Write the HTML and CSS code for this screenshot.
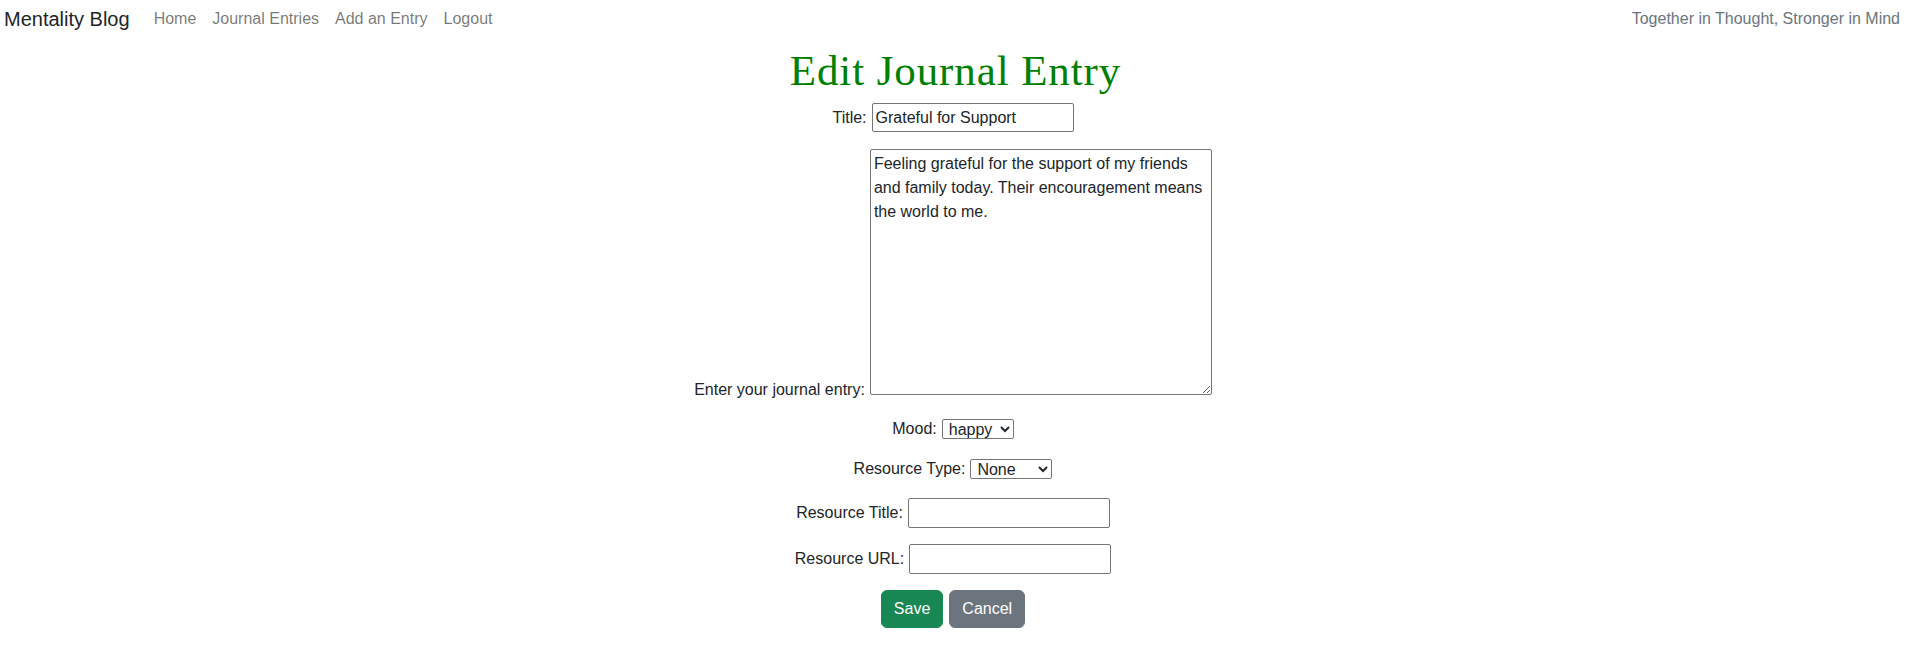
FILE: index.html
```html
<!DOCTYPE html>
<html lang="en">
<head>
<meta charset="utf-8">
<title>Edit Journal Entry - Mentality Blog</title>
<link rel="stylesheet" href="styles.css">
</head>
<body>
<nav class="navbar">
  <a class="brand" href="#">Mentality Blog</a>
  <ul class="nav-links">
    <li><a href="#">Home</a></li>
    <li><a href="#">Journal Entries</a></li>
    <li><a href="#">Add an Entry</a></li>
    <li><a href="#">Logout</a></li>
  </ul>
  <span class="tagline">Together in Thought, Stronger in Mind</span>
</nav>
<main class="page">
  <h1 class="page-title">Edit Journal Entry</h1>
  <form class="entry-form">
    <div class="row row-title">
      <label for="title">Title:</label>
      <input type="text" id="title" class="text-input" value="Grateful for Support">
    </div>
    <div class="row row-body">
      <label for="body" class="body-label">Enter your journal entry:</label>
      <textarea id="body" class="body-input">Feeling grateful for the support of my friends and family today. Their encouragement means the world to me.</textarea>
    </div>
    <div class="row row-select">
      <label for="mood">Mood:</label>
      <select id="mood" class="select mood-select">
        <option selected>happy</option>
        <option>sad</option>
        <option>anxious</option>
        <option>calm</option>
      </select>
    </div>
    <div class="row row-select">
      <label for="rtype">Resource Type:</label>
      <select id="rtype" class="select type-select">
        <option selected>None</option>
        <option>Article</option>
        <option>Video</option>
      </select>
    </div>
    <div class="row row-input">
      <label for="rtitle">Resource Title:</label>
      <input type="text" id="rtitle" class="text-input">
    </div>
    <div class="row row-input">
      <label for="rurl">Resource URL:</label>
      <input type="text" id="rurl" class="text-input">
    </div>
    <div class="row row-buttons">
      <button type="submit" class="btn btn-save">Save</button>
      <button type="button" class="btn btn-cancel">Cancel</button>
    </div>
  </form>
</main>
</body>
</html>
```

FILE: styles.css
```css
* { box-sizing: border-box; }

body {
  margin: 0;
  font-family: "Liberation Sans", Arial, sans-serif;
  font-size: 16px;
  line-height: 1.5;
  color: #212529;
  background: #fff;
}

.navbar {
  display: flex;
  align-items: center;
  height: 40px;
  padding: 0 11px 0 4px;
}

.brand {
  font-size: 20px;
  line-height: 30px;
  padding: 4px 0 6px;
  margin-right: 16px;
  color: #212529;
  text-decoration: none;
}

.nav-links {
  display: flex;
  list-style: none;
  margin: 0;
  padding: 0;
  flex: 1;
}

.nav-links a {
  display: block;
  padding: 7px 8px 9px;
  line-height: 24px;
  color: rgba(0, 0, 0, 0.55);
  text-decoration: none;
}

.tagline {
  color: #6c757d;
  padding-bottom: 2px;
}

.page-title {
  margin: 7px 0 8px;
  text-align: center;
  font-family: "Liberation Serif", Georgia, serif;
  font-weight: 400;
  font-size: 43px;
  letter-spacing: 0.9px;
  line-height: 48px;
  color: #008000;
}

.entry-form {
  display: flex;
  flex-direction: column;
}

.row {
  display: flex;
  justify-content: center;
  align-items: center;
  gap: 5px;
  padding-right: 5px;
  margin-bottom: 16px;
}

.row-title { margin-bottom: 17px; }

.row-body {
  align-items: flex-end;
  margin-bottom: 22px;
}

.body-label {
  line-height: 16px;
  margin-bottom: -3px;
}

.row-select { height: 24px; }
.row-select + .row-input { margin-top: 1px; }

.text-input {
  width: 202px;
  height: 29px;
  padding: 1px 3px;
  border: 1px solid #767676;
  border-radius: 2px;
  font: inherit;
  color: #212529;
  margin: 0;
}

.row-input .text-input { height: 30px; }

.body-input {
  width: 342px;
  height: 246px;
  padding: 2px 3px;
  border: 1px solid #767676;
  border-radius: 2px;
  font: inherit;
  line-height: 24px;
  color: #212529;
  margin: 0;
  resize: both;
}

.select {
  height: 20px;
  padding: 0 0 0 2px;
  font-family: inherit;
  font-size: 16px;
  line-height: normal;
  color: #212529;
  border: 1px solid #767676;
  border-radius: 2px;
  background: #fff;
  margin: 0;
}

.mood-select { width: 72px; }
.type-select { width: 82px; }

.row-buttons { gap: 6px; }

.btn {
  padding: 6px 12px;
  font: inherit;
  line-height: 24px;
  border: 1px solid transparent;
  border-radius: 6px;
  color: #fff;
  cursor: pointer;
}

.btn-save { background: #198754; border-color: #198754; }
.btn-cancel { background: #6c757d; border-color: #6c757d; }
```
